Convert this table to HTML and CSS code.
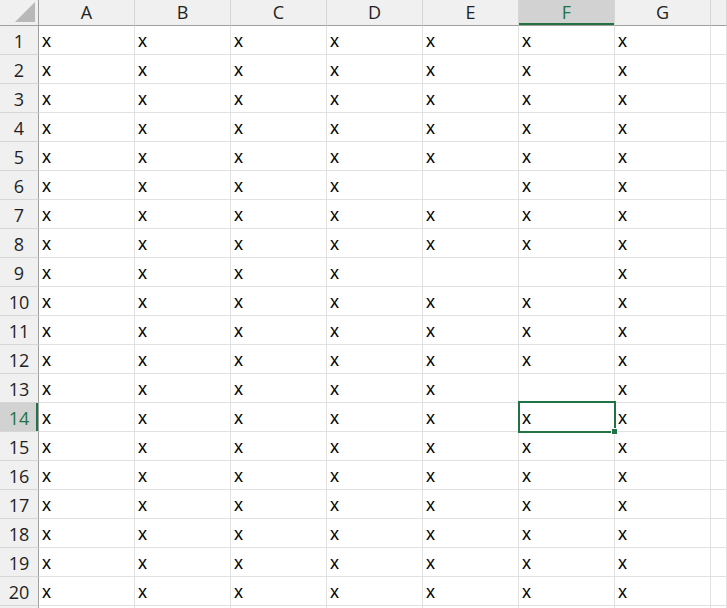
FILE: index.html
```html
<!DOCTYPE html>
<html>
<head>
<meta charset="utf-8">
<link rel="stylesheet" href="styles.css">
</head>
<body>
<div class="sheet">
  <div class="row head">
    <div class="rh corner"><span class="tri"></span></div>
    <div class="ch">A</div><div class="ch">B</div><div class="ch">C</div><div class="ch">D</div><div class="ch">E</div><div class="ch sel">F</div><div class="ch">G</div><div class="ch last"></div>
  </div>
  <div class="row"><div class="rh">1</div><div class="c">x</div><div class="c">x</div><div class="c">x</div><div class="c">x</div><div class="c">x</div><div class="c">x</div><div class="c">x</div><div class="c last"></div></div>
  <div class="row"><div class="rh">2</div><div class="c">x</div><div class="c">x</div><div class="c">x</div><div class="c">x</div><div class="c">x</div><div class="c">x</div><div class="c">x</div><div class="c last"></div></div>
  <div class="row"><div class="rh">3</div><div class="c">x</div><div class="c">x</div><div class="c">x</div><div class="c">x</div><div class="c">x</div><div class="c">x</div><div class="c">x</div><div class="c last"></div></div>
  <div class="row"><div class="rh">4</div><div class="c">x</div><div class="c">x</div><div class="c">x</div><div class="c">x</div><div class="c">x</div><div class="c">x</div><div class="c">x</div><div class="c last"></div></div>
  <div class="row"><div class="rh">5</div><div class="c">x</div><div class="c">x</div><div class="c">x</div><div class="c">x</div><div class="c">x</div><div class="c">x</div><div class="c">x</div><div class="c last"></div></div>
  <div class="row"><div class="rh">6</div><div class="c">x</div><div class="c">x</div><div class="c">x</div><div class="c">x</div><div class="c"></div><div class="c">x</div><div class="c">x</div><div class="c last"></div></div>
  <div class="row"><div class="rh">7</div><div class="c">x</div><div class="c">x</div><div class="c">x</div><div class="c">x</div><div class="c">x</div><div class="c">x</div><div class="c">x</div><div class="c last"></div></div>
  <div class="row"><div class="rh">8</div><div class="c">x</div><div class="c">x</div><div class="c">x</div><div class="c">x</div><div class="c">x</div><div class="c">x</div><div class="c">x</div><div class="c last"></div></div>
  <div class="row"><div class="rh">9</div><div class="c">x</div><div class="c">x</div><div class="c">x</div><div class="c">x</div><div class="c"></div><div class="c"></div><div class="c">x</div><div class="c last"></div></div>
  <div class="row"><div class="rh">10</div><div class="c">x</div><div class="c">x</div><div class="c">x</div><div class="c">x</div><div class="c">x</div><div class="c">x</div><div class="c">x</div><div class="c last"></div></div>
  <div class="row"><div class="rh">11</div><div class="c">x</div><div class="c">x</div><div class="c">x</div><div class="c">x</div><div class="c">x</div><div class="c">x</div><div class="c">x</div><div class="c last"></div></div>
  <div class="row"><div class="rh">12</div><div class="c">x</div><div class="c">x</div><div class="c">x</div><div class="c">x</div><div class="c">x</div><div class="c">x</div><div class="c">x</div><div class="c last"></div></div>
  <div class="row"><div class="rh">13</div><div class="c">x</div><div class="c">x</div><div class="c">x</div><div class="c">x</div><div class="c">x</div><div class="c"></div><div class="c">x</div><div class="c last"></div></div>
  <div class="row"><div class="rh sel">14</div><div class="c">x</div><div class="c">x</div><div class="c">x</div><div class="c">x</div><div class="c">x</div><div class="c active">x<span class="handle"></span></div><div class="c">x</div><div class="c last"></div></div>
  <div class="row"><div class="rh">15</div><div class="c">x</div><div class="c">x</div><div class="c">x</div><div class="c">x</div><div class="c">x</div><div class="c">x</div><div class="c">x</div><div class="c last"></div></div>
  <div class="row"><div class="rh">16</div><div class="c">x</div><div class="c">x</div><div class="c">x</div><div class="c">x</div><div class="c">x</div><div class="c">x</div><div class="c">x</div><div class="c last"></div></div>
  <div class="row"><div class="rh">17</div><div class="c">x</div><div class="c">x</div><div class="c">x</div><div class="c">x</div><div class="c">x</div><div class="c">x</div><div class="c">x</div><div class="c last"></div></div>
  <div class="row"><div class="rh">18</div><div class="c">x</div><div class="c">x</div><div class="c">x</div><div class="c">x</div><div class="c">x</div><div class="c">x</div><div class="c">x</div><div class="c last"></div></div>
  <div class="row"><div class="rh">19</div><div class="c">x</div><div class="c">x</div><div class="c">x</div><div class="c">x</div><div class="c">x</div><div class="c">x</div><div class="c">x</div><div class="c last"></div></div>
  <div class="row"><div class="rh">20</div><div class="c">x</div><div class="c">x</div><div class="c">x</div><div class="c">x</div><div class="c">x</div><div class="c">x</div><div class="c">x</div><div class="c last"></div></div>
  <div class="row"><div class="rh"></div><div class="c"></div><div class="c"></div><div class="c"></div><div class="c"></div><div class="c"></div><div class="c"></div><div class="c"></div><div class="c last"></div></div>
</div>
</body>
</html>
```
FILE: styles.css
```css
html, body {
  margin: 0;
  padding: 0;
  background: #ffffff;
  overflow: hidden;
}
.sheet {
  width: 727px;
  height: 608px;
  overflow: hidden;
}
.row {
  display: flex;
  height: 29px;
}
.row.head {
  height: 26px;
}
.rh, .ch, .c {
  box-sizing: border-box;
  flex: none;
}
.rh {
  width: 39px;
  background: #f0f0f0;
  border-right: 1px solid #9f9f9f;
  border-bottom: 1px solid #d6d6d6;
  text-align: center;
  font-family: "Open Sans", "Noto Sans", sans-serif;
  font-size: 18px;
  color: #1f1f1f;
  line-height: 26px;
  padding-top: 2px;
}
.rh.sel {
  background: #d2d2d2;
  color: #217346;
  box-shadow: inset -2px 0 0 #217346;
}
.corner {
  position: relative;
  border-bottom: 1px solid #9f9f9f;
  padding: 0;
}
.tri {
  position: absolute;
  right: 3px;
  bottom: 3px;
  width: 0;
  height: 0;
  border-left: 20px solid transparent;
  border-bottom: 20px solid #b8b8b8;
}
.ch {
  width: 96px;
  background: #f0f0f0;
  border-right: 1px solid #d6d6d6;
  border-bottom: 1px solid #9f9f9f;
  text-align: center;
  font-family: "Open Sans", "Noto Sans", sans-serif;
  font-size: 18px;
  color: #1f1f1f;
  line-height: 25px;
}
.ch.sel {
  background: #d2d2d2;
  color: #217346;
  box-shadow: inset 0 -2px 0 #217346;
}
.ch.last, .c.last {
  flex: 1;
  width: auto;
}
.c {
  width: 96px;
  border-right: 1px solid #e1e1e1;
  border-bottom: 1px solid #e1e1e1;
  font-family: "Liberation Sans", Arial, sans-serif;
  font-size: 18px;
  color: #000000;
  line-height: 26px;
  padding: 2px 0 0 3px;
}
.c.active {
  position: relative;
}
.c.active::after {
  content: "";
  position: absolute;
  left: -1px;
  top: -2px;
  right: -2px;
  bottom: -2px;
  border: 2px solid #217346;
  pointer-events: none;
}
.handle {
  position: absolute;
  right: -4px;
  bottom: -4px;
  width: 5px;
  height: 5px;
  background: #217346;
  border: 1px solid #ffffff;
  z-index: 2;
}
```
